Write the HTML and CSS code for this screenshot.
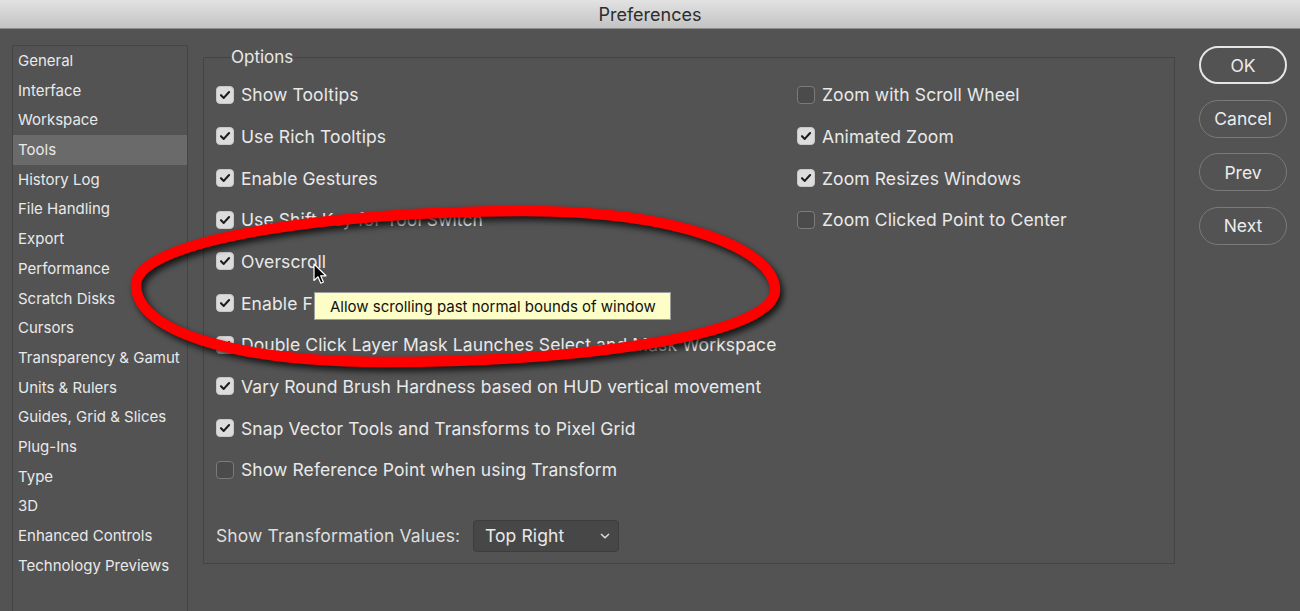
FILE: index.html
```html
<!DOCTYPE html>
<html lang="en">
<head>
    <meta charset="UTF-8">
    <meta name="viewport" content="width=device-width, initial-scale=1.0">
    <title>Preferences</title>
    <link rel="stylesheet" href="styles.css">
</head>
<body>
    <div class="titlebar">Preferences</div>

    <div class="main">
        <ul class="sidebar">
            <li>General</li>
            <li>Interface</li>
            <li>Workspace</li>
            <li class="selected">Tools</li>
            <li>History Log</li>
            <li>File Handling</li>
            <li>Export</li>
            <li>Performance</li>
            <li>Scratch Disks</li>
            <li>Cursors</li>
            <li>Transparency &amp; Gamut</li>
            <li>Units &amp; Rulers</li>
            <li>Guides, Grid &amp; Slices</li>
            <li>Plug-Ins</li>
            <li>Type</li>
            <li>3D</li>
            <li>Enhanced Controls</li>
            <li>Technology Previews</li>
        </ul>

        <fieldset class="options">
            <legend>Options</legend>
            <div class="columns">
                <div class="col col-left">
                    <label class="opt"><span class="box on"><svg viewBox="0 0 18 18"><path d="M4.5 9.2 L7.6 12.3 L13.6 5.6"/></svg></span>Show Tooltips</label>
                    <label class="opt"><span class="box on"><svg viewBox="0 0 18 18"><path d="M4.5 9.2 L7.6 12.3 L13.6 5.6"/></svg></span>Use Rich Tooltips</label>
                    <label class="opt"><span class="box on"><svg viewBox="0 0 18 18"><path d="M4.5 9.2 L7.6 12.3 L13.6 5.6"/></svg></span>Enable Gestures</label>
                    <label class="opt"><span class="box on"><svg viewBox="0 0 18 18"><path d="M4.5 9.2 L7.6 12.3 L13.6 5.6"/></svg></span>Use Shift Key for Tool Switch</label>
                    <label class="opt"><span class="box on"><svg viewBox="0 0 18 18"><path d="M4.5 9.2 L7.6 12.3 L13.6 5.6"/></svg></span>Overscroll</label>
                    <label class="opt"><span class="box on"><svg viewBox="0 0 18 18"><path d="M4.5 9.2 L7.6 12.3 L13.6 5.6"/></svg></span>Enable Flick Panning</label>
                    <label class="opt"><span class="box on"><svg viewBox="0 0 18 18"><path d="M4.5 9.2 L7.6 12.3 L13.6 5.6"/></svg></span>Double Click Layer Mask Launches Select and Mask Workspace</label>
                    <label class="opt"><span class="box on"><svg viewBox="0 0 18 18"><path d="M4.5 9.2 L7.6 12.3 L13.6 5.6"/></svg></span>Vary Round Brush Hardness based on HUD vertical movement</label>
                    <label class="opt"><span class="box on"><svg viewBox="0 0 18 18"><path d="M4.5 9.2 L7.6 12.3 L13.6 5.6"/></svg></span>Snap Vector Tools and Transforms to Pixel Grid</label>
                    <label class="opt"><span class="box"></span>Show Reference Point when using Transform</label>
                </div>
                <div class="col">
                    <label class="opt"><span class="box"></span>Zoom with Scroll Wheel</label>
                    <label class="opt"><span class="box on"><svg viewBox="0 0 18 18"><path d="M4.5 9.2 L7.6 12.3 L13.6 5.6"/></svg></span>Animated Zoom</label>
                    <label class="opt"><span class="box on"><svg viewBox="0 0 18 18"><path d="M4.5 9.2 L7.6 12.3 L13.6 5.6"/></svg></span>Zoom Resizes Windows</label>
                    <label class="opt"><span class="box"></span>Zoom Clicked Point to Center</label>
                </div>
            </div>
            <div class="transform-row">
                <span class="field-label">Show Transformation Values:</span>
                <div class="select">
                    <span>Top Right</span>
                    <svg viewBox="0 0 10 6"><path d="M1 1 L5 4.8 L9 1"/></svg>
                </div>
            </div>
        </fieldset>

        <div class="buttons">
            <button class="btn default">OK</button>
            <button class="btn">Cancel</button>
            <button class="btn">Prev</button>
            <button class="btn">Next</button>
        </div>
    </div>

    <!-- annotation drawn over the dialog -->
    <svg class="markup" viewBox="0 0 1300 611">
        <path d="M136 285 C136 240 330 211 525 211 C680 211 775 250 775 290 C775 335 580 362 385 362 C230 362 136 330 136 285 Z"/>
    </svg>

    <div class="tooltip">Allow scrolling past normal bounds of window</div>

    <svg class="cursor" viewBox="0 0 14 22">
        <path d="M1 1 L1 17.5 L5 13.8 L7.8 20.2 L10.4 19 L7.7 12.8 L13 12.8 Z"/>
    </svg>
</body>
</html>
```

FILE: styles.css
```css
html, body {
    margin: 0;
    height: 100%;
    overflow: hidden;
}
body {
    position: relative;
    background: #535353;
    color: #e9e9e9;
    font-family: Inter, "Open Sans", sans-serif;
}
.titlebar {
    height: 28px;
    line-height: 29px;
    text-align: center;
    font-size: 18px;
    color: #2c2c2c;
    background: linear-gradient(#e2e2e2, #c3c3c3);
    border-bottom: 1px solid #8e8e8e;
}
.main {
    display: flex;
    align-items: flex-start;
    padding-left: 12px;
}
.sidebar {
    list-style: none;
    margin: 16px 0 0 0;
    padding: 0;
    width: 174px;
    height: 565px;
    border: 1px solid #444;
    border-bottom: none;
    font-size: 15px;
}
.sidebar li {
    height: 29.7px;
    line-height: 29.7px;
    padding-left: 5px;
    white-space: nowrap;
}
.sidebar li.selected {
    background: #6a6a6a;
}
.options {
    margin: 18px 0 0 15px;
    width: 972px;
    height: 517px;
    padding: 6px 0 0 12px;
    border: 1px solid #444;
    box-sizing: border-box;
}
.options legend {
    margin-left: 15px;
    padding: 0;
    font-size: 17px;
    line-height: 20px;
}
.columns {
    display: grid;
    grid-template-columns: 581px 1fr;
    padding-top: 1px;
}
.col {
    display: flex;
    flex-direction: column;
}
.opt {
    display: flex;
    align-items: center;
    height: 41.67px;
    font-size: 17.5px;
    letter-spacing: 0.1px;
    white-space: nowrap;
}
.box {
    width: 18px;
    height: 18px;
    margin-right: 7px;
    border-radius: 4px;
    box-sizing: border-box;
    border: 1px solid #7b7b7b;
    background: #4b4b4b;
    flex: none;
}
.box.on {
    background: #dcdcdc;
    border-color: #c8c8c8;
}
.box svg {
    display: block;
    width: 16px;
    height: 16px;
}
.box path {
    fill: none;
    stroke: #1c1c1c;
    stroke-width: 2.3;
    stroke-linecap: round;
    stroke-linejoin: round;
}
.transform-row {
    display: flex;
    align-items: center;
    margin-top: 29px;
    font-size: 17.5px;
    letter-spacing: 0.1px;
}
.field-label {
    color: #dedede;
    width: 257px;
}
.select {
    display: flex;
    align-items: center;
    justify-content: space-between;
    width: 146px;
    height: 32px;
    box-sizing: border-box;
    padding: 0 8px 0 11px;
    background: #474747;
    border: 1px solid #3d3d3d;
    border-radius: 4px;
}
.select svg {
    width: 10px;
    height: 6px;
}
.select path {
    fill: none;
    stroke: #e0e0e0;
    stroke-width: 1.4;
}
.buttons {
    display: flex;
    flex-direction: column;
    gap: 15.5px;
    margin: 17px 0 0 24px;
}
.btn {
    width: 88px;
    height: 38px;
    border-radius: 19px;
    border: 1.5px solid #7a7a7a;
    background: #535353;
    color: #ececec;
    font-family: Inter, "Open Sans", sans-serif;
    font-size: 17.5px;
    padding: 0;
}
.btn.default {
    border: 2px solid #e6e6e6;
}
.markup {
    position: absolute;
    left: 0;
    top: 0;
    width: 1300px;
    height: 611px;
    pointer-events: none;
    filter: drop-shadow(3px 4px 3px rgba(0, 0, 0, 0.75));
}
.markup path {
    fill: none;
    stroke: #ff0000;
    stroke-width: 10.5;
}
.tooltip {
    position: absolute;
    left: 314px;
    top: 292px;
    width: 357px;
    height: 28px;
    box-sizing: border-box;
    padding-left: 15px;
    line-height: 27px;
    font-size: 15px;
    color: #111;
    background: #fdfdc8;
    border: 1px solid #9c9c9c;
    white-space: nowrap;
}
.cursor {
    position: absolute;
    left: 313px;
    top: 263px;
    width: 14px;
    height: 22px;
}
.cursor path {
    fill: #000;
    stroke: #fff;
    stroke-width: 1.2;
    stroke-linejoin: round;
}
```
